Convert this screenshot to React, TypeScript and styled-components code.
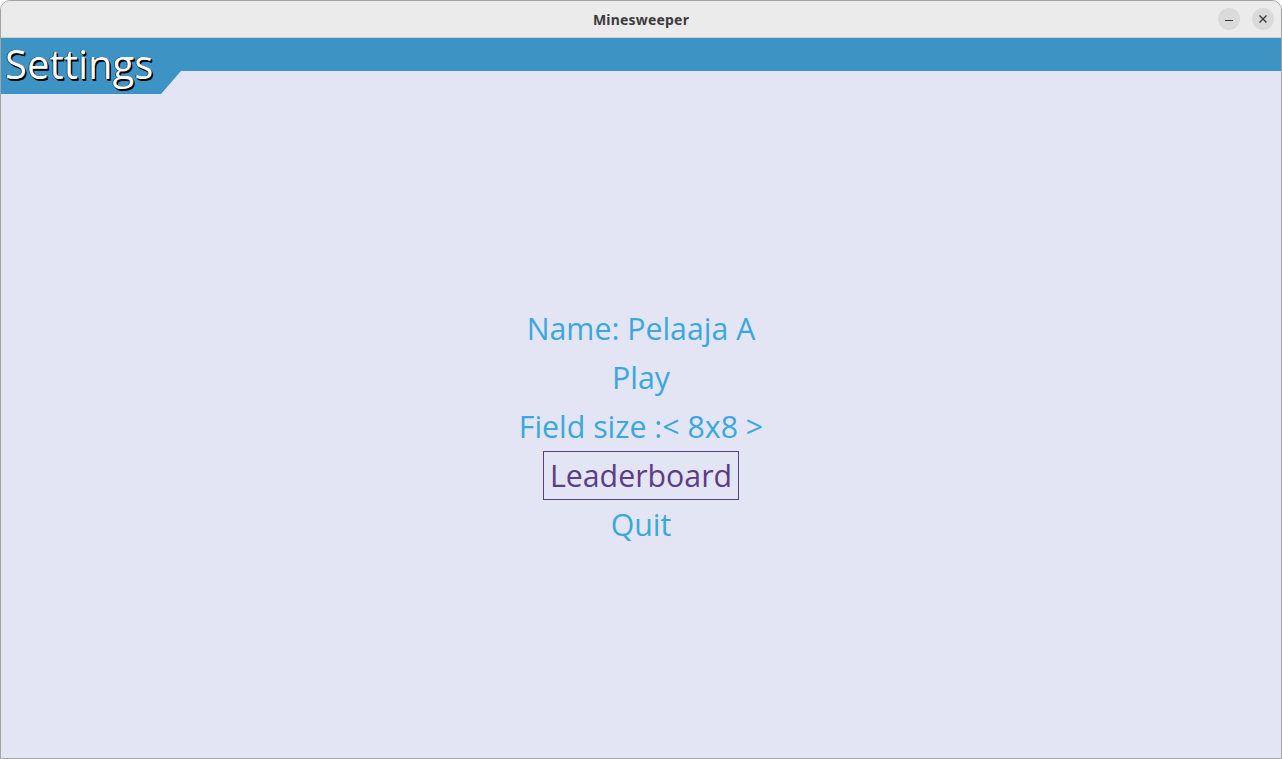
import React from "react";
import styled, { createGlobalStyle } from "styled-components";

const Global = createGlobalStyle`
  html, body { margin: 0; padding: 0; background: #ffffff; }
  body { width: 1282px; height: 759px; overflow: hidden; }
  * { box-sizing: border-box; }
`;

const Window = styled.div`
  width: 1282px;
  height: 759px;
  border: 1px solid #a3a3a3;
  border-radius: 10px 10px 0 0;
  overflow: hidden;
  display: flex;
  flex-direction: column;
  background: #e3e5f4;
`;

const TitleBar = styled.div`
  height: 37px;
  flex: none;
  background: #ebebeb;
  border-bottom: 1px solid #d0d0d0;
  display: flex;
  align-items: center;
  justify-content: center;
  position: relative;
  font-family: "Noto Sans", "DejaVu Sans", sans-serif;
  font-weight: 700;
  font-size: 14px;
  letter-spacing: 0.2px;
  color: #3d3d3d;
`;

const Controls = styled.div`
  position: absolute;
  right: 7px;
  top: 7px;
  display: flex;
  gap: 12px;
`;

const CtrlButton = styled.div`
  width: 22px;
  height: 22px;
  border-radius: 50%;
  background: #dadada;
  display: flex;
  align-items: center;
  justify-content: center;
`;

const Header = styled.div`
  height: 33px;
  flex: none;
  background: #3d94c4;
  position: relative;
`;

const Tab = styled.div`
  position: absolute;
  left: 0;
  top: 0;
  width: 180px;
  height: 56px;
  background: #3d94c4;
  clip-path: polygon(0 0, 180px 0, 180px 33px, 160px 56px, 0 56px);
`;

const HeaderTitle = styled.div`
  position: absolute;
  left: 4px;
  top: 0px;
  font-family: "Open Sans", "Noto Sans", sans-serif;
  font-size: 40px;
  line-height: 52px;
  color: #ffffff;
  text-shadow: 1px 1px 0 #000, 1.5px 1.5px 0 #000, -0.5px 0 0 #000, 0 -0.5px 0 #000;
`;

const Content = styled.div`
  flex: 1;
  display: flex;
  flex-direction: column;
  align-items: center;
  padding-top: 233px;
`;

const MenuItem = styled.div<{ $selected?: boolean }>`
  height: 49px;
  display: flex;
  align-items: center;
  padding: 0 6px;
  font-family: "Open Sans", "Noto Sans", sans-serif;
  font-size: 30.3px;
  color: ${(p) => (p.$selected ? "#5c3d87" : "#3aa8dc")};
  border: 1px solid ${(p) => (p.$selected ? "#5c3d87" : "transparent")};
`;

export default function App() {
  return (
    <>
      <Global />
      <Window>
        <TitleBar>
          Minesweeper
          <Controls>
            <CtrlButton>
              <svg width="10" height="10" viewBox="0 0 10 10">
                <line x1="1" y1="6.5" x2="9" y2="6.5" stroke="#3a3a3a" strokeWidth="1.2" />
              </svg>
            </CtrlButton>
            <CtrlButton>
              <svg width="10" height="10" viewBox="0 0 10 10">
                <path d="M1.5 1.5 L8.5 8.5 M8.5 1.5 L1.5 8.5" stroke="#3a3a3a" strokeWidth="1.4" />
              </svg>
            </CtrlButton>
          </Controls>
        </TitleBar>
        <Header>
          <Tab />
          <HeaderTitle>Settings</HeaderTitle>
        </Header>
        <Content>
          <MenuItem>Name: Pelaaja A</MenuItem>
          <MenuItem>Play</MenuItem>
          <MenuItem>Field size :&lt; 8x8 &gt;</MenuItem>
          <MenuItem $selected>Leaderboard</MenuItem>
          <MenuItem>Quit</MenuItem>
        </Content>
      </Window>
    </>
  );
}
